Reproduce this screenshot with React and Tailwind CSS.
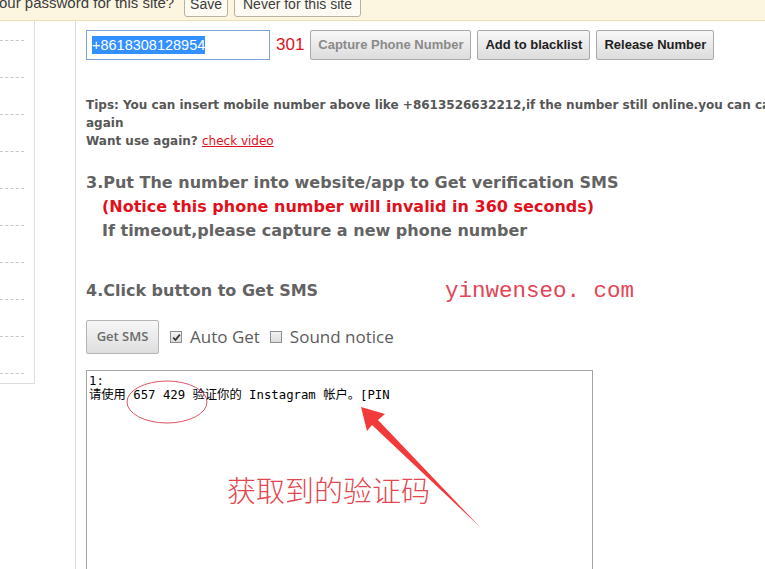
import React from 'react';

const dashedRows = Array.from({ length: 10 });

function GrayButton({ children, className = '', disabled = false }) {
  return (
    <button
      type="button"
      className={`h-[30px] rounded-[2px] border border-[#a9a9a9] bg-gradient-to-b from-[#f8f8f8] to-[#dcdcdc] font-['Liberation_Sans',Arial,sans-serif] text-[13px] font-bold ${
        disabled ? 'text-[#8a8a8a]' : 'text-[#1e1e1e]'
      } ${className}`}
    >
      {children}
    </button>
  );
}

function Check({ checked }) {
  return (
    <span className="flex h-[12px] w-[12px] items-center justify-center border border-[#8e8f8f] bg-gradient-to-b from-[#f2f2f2] to-[#dcdcdc]">
      {checked && (
        <svg width="9" height="9" viewBox="0 0 9 9">
          <path d="M1.2 4.6 L3.5 7 L7.8 1.6" fill="none" stroke="#333" strokeWidth="1.8" />
        </svg>
      )}
    </span>
  );
}

const App = () => {
  return (
    <div className="relative h-[569px] w-[765px] overflow-hidden bg-white">
      {/* browser password bar */}
      <div className="h-[21px] overflow-hidden border-b border-[#ecdfb6] bg-[#fcf6e1]">
        <div className="-mt-[10px] flex h-[27px] items-center font-['Liberation_Sans',Arial,sans-serif] text-[#3c3c3c]">
          <span className="-ml-[1px] text-[15px] whitespace-nowrap">our password for this site?</span>
          <span className="ml-[10px] rounded-[3px] border border-[#b9b2a2] bg-[#fdfbf4] px-[5px] text-[14px] leading-[24px]">Save</span>
          <span className="ml-[6px] rounded-[3px] border border-[#b9b2a2] bg-[#fdfbf4] px-[8px] text-[14px] leading-[24px] whitespace-nowrap">Never for this site</span>
        </div>
      </div>

      <div className="flex">
        {/* left list */}
        <div className="h-[363px] w-[35px] shrink-0 overflow-hidden border-r border-b border-[#dedede] pt-[19px]">
          {dashedRows.map((_, i) => (
            <div key={i} className="h-[37px] w-[24px] border-t border-dashed border-[#c8c8c8]" />
          ))}
        </div>
        <div className="h-[548px] w-[41px] shrink-0 border-r border-[#dedede]" />

        {/* main column */}
        <div className="pl-[10px] pt-[9px]">
          <div className="flex items-center">
            <div className="flex h-[30px] w-[184px] items-center border border-[#7ea2d6] px-[5px] font-['Liberation_Sans',Arial,sans-serif] text-[14.5px]">
              <span className="bg-[#3390ff] leading-[18px] text-white">+8618308128954</span>
            </div>
            <span className="ml-[6px] font-['Liberation_Sans',Arial,sans-serif] text-[17px] text-[#e3101c]">301</span>
            <GrayButton disabled className="ml-[6px] w-[161px]">Capture Phone Number</GrayButton>
            <GrayButton className="ml-[6px] w-[113px]">Add to blacklist</GrayButton>
            <GrayButton className="ml-[6px] w-[118px]">Release Number</GrayButton>
          </div>

          <div className="mt-[36px] font-['DejaVu_Sans',Verdana,sans-serif] text-[12px] leading-[18px] font-bold whitespace-nowrap text-[#575757]">
            <div>Tips: You can insert mobile number above like +8613526632212,if the number still online.you can call it</div>
            <div>again</div>
            <div>
              Want use again?{' '}
              <a href="#" className="font-normal text-[#e3101c] underline">check video</a>
            </div>
          </div>

          <div className="mt-[21px] font-['DejaVu_Sans',Verdana,sans-serif] text-[16px] leading-[24px] font-bold whitespace-nowrap text-[#636363]">
            <div>3.Put The number into website/app to Get verification SMS</div>
            <div className="pl-[16px] text-[#e3101c]">(Notice this phone number will invalid in 360 seconds)</div>
            <div className="pl-[16px]">If timeout,please capture a new phone number</div>
          </div>

          <div className="mt-[36px] flex h-[24px] items-center whitespace-nowrap">
            <span className="font-['DejaVu_Sans',Verdana,sans-serif] text-[16px] leading-[24px] font-bold text-[#636363]">
              4.Click button to Get SMS
            </span>
            <span className="ml-[127px] font-['Liberation_Mono','Noto_Sans_CJK_SC',monospace] text-[22.5px] leading-[24px] text-[#e24555]">
              yinwenseo. com
            </span>
          </div>

          <div className="mt-[17px] flex items-center font-['Open_Sans',sans-serif] text-[#5c5c5c]">
            <button
              type="button"
              className="h-[34px] w-[73px] rounded-[2px] border border-[#b5b5b5] bg-gradient-to-b from-[#f7f7f7] to-[#dedede] text-[13px] font-semibold text-[#6b6b6b]"
            >
              Get SMS
            </button>
            <span className="ml-[11px]"><Check checked /></span>
            <span className="ml-[8px] text-[17px]">Auto Get</span>
            <span className="ml-[10px]"><Check /></span>
            <span className="ml-[8px] text-[17px]">Sound notice</span>
          </div>

          {/* sms box with notes drawn over it */}
          <div className="relative mt-[16px] w-[507px]">
            <textarea
              readOnly
              defaultValue={'1:\n请使用 657 429 验证你的 Instagram 帐户。[PIN'}
              className="block h-[230px] w-[507px] resize border border-[#a5a5a5] px-[2px] py-[3px] font-['DejaVu_Sans_Mono','Noto_Sans_CJK_SC',monospace] text-[12.3px] leading-[14px] text-black outline-none"
            />
            <svg className="pointer-events-none absolute top-0 left-0" width="507" height="230">
              <ellipse cx="81" cy="32" rx="40" ry="21" fill="none" stroke="#e05565" strokeWidth="1" />
              <polygon
                points="275,37 299,44 292,50 394,157 286,55 281,61"
                fill="#f23a3a"
              />
            </svg>
            <span className="absolute top-[98px] left-[141px] font-['Noto_Sans_CJK_SC',sans-serif] text-[29px] font-light whitespace-nowrap text-[#e2474f]">
              获取到的验证码
            </span>
          </div>
        </div>
      </div>
    </div>
  );
};

export default App;
